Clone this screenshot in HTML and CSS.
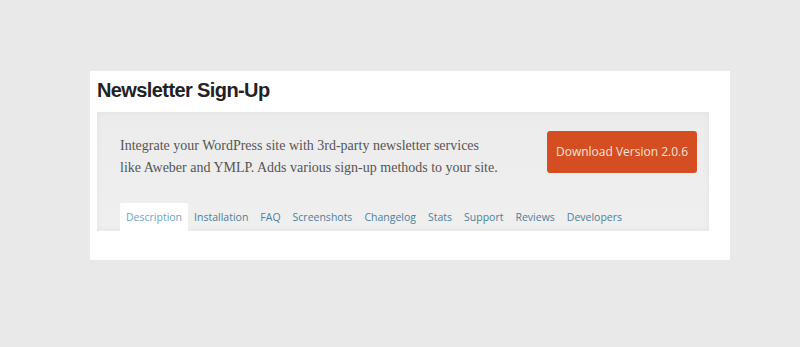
FILE: index.html
```html
<!DOCTYPE html>
<html lang="en">
<head>
    <meta charset="UTF-8">
    <title>Newsletter Sign-Up</title>
    <link rel="stylesheet" href="styles.css">
</head>
<body>
    <div class="plugin-card">
        <h1>Newsletter Sign-Up</h1>
        <div class="plugin-header">
            <div class="header-top">
                <p class="summary">Integrate your WordPress site with 3rd-party newsletter services<br>like Aweber and YMLP. Adds various sign-up methods to your site.</p>
                <a class="download" href="#">Download Version 2.0.6</a>
            </div>
            <ul class="tabs">
                <li class="current">Description</li>
                <li>Installation</li>
                <li>FAQ</li>
                <li>Screenshots</li>
                <li>Changelog</li>
                <li>Stats</li>
                <li>Support</li>
                <li>Reviews</li>
                <li>Developers</li>
            </ul>
        </div>
    </div>
</body>
</html>
```

FILE: styles.css
```css
body {
    margin: 0;
    background-color: #e9e9e9;
    font-family: "Open Sans", sans-serif;
}
.plugin-card {
    margin: 71px 0 0 90px;
    width: 640px;
    height: 189px;
    background-color: #fff;
    padding: 0 21px 0 7px;
    box-sizing: border-box;
}
h1 {
    margin: 0;
    padding-top: 4px;
    height: 37px;
    font-family: "Liberation Sans", Arial, sans-serif;
    font-size: 20px;
    letter-spacing: -0.6px;
    line-height: 30px;
    color: #222;
    font-weight: bold;
}
.plugin-header {
    height: 119px;
    background: linear-gradient(#ececec, #efefef);
    box-shadow: inset 0 0 6px rgba(0, 0, 0, 0.05);
    display: flex;
    flex-direction: column;
    justify-content: space-between;
}
.header-top {
    display: flex;
    justify-content: space-between;
    align-items: flex-start;
    padding: 19px 12px 0 23px;
}
.summary {
    margin: 4px 0 0;
    font-family: "Liberation Serif", "Times New Roman", serif;
    font-size: 14px;
    line-height: 22px;
    color: #555;
}
.download {
    display: block;
    width: 150px;
    height: 42px;
    line-height: 42px;
    text-align: center;
    background-color: #d54e21;
    color: #f5e3dc;
    font-size: 12px;
    text-decoration: none;
    border-radius: 3px;
    box-shadow: 0 0 1px #fff;
}
.tabs {
    list-style: none;
    margin: 0;
    padding: 0 0 0 23px;
    display: flex;
}
.tabs li {
    font-size: 10.5px;
    line-height: 28px;
    padding: 0 6px;
    color: #4b7f9b;
}
.tabs li.current {
    background-color: #fff;
    color: #6aa5cb;
    border-radius: 2px 2px 0 0;
}
```
